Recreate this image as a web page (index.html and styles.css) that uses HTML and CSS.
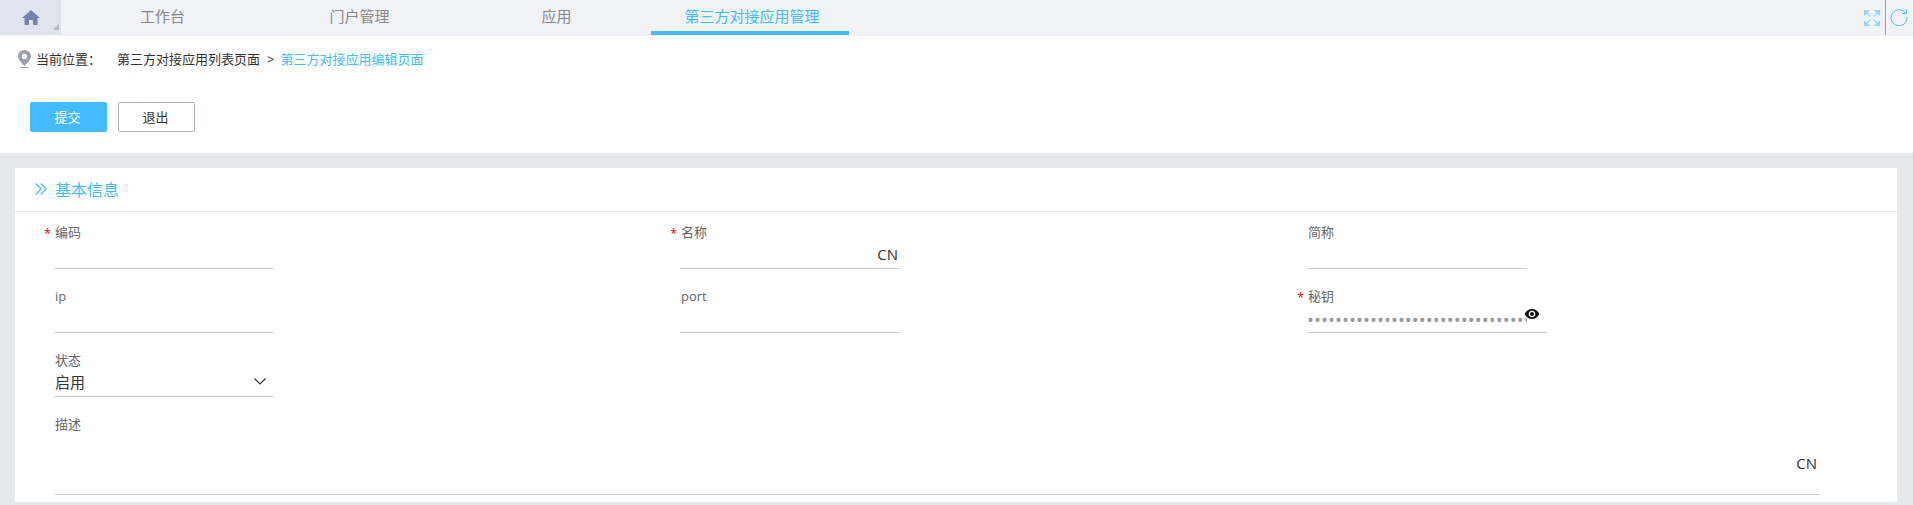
FILE: index.html
```html
<!DOCTYPE html>
<html lang="zh-CN">
<head>
    <meta charset="UTF-8">
    <title>第三方对接应用编辑页面</title>
    <link rel="stylesheet" href="styles.css">
</head>
<body>
    <div class="page">
        <div class="topbar">
            <div class="home">
                <svg class="home-icon" viewBox="0 0 18 15"><path d="M9 0 L18 8 H15.5 V15 H11 V10 H7 V15 H2.5 V8 H0 Z"/></svg>
                <span class="home-corner"></span>
            </div>
            <div class="tabs">
                <div class="tab">工作台</div>
                <div class="tab">门户管理</div>
                <div class="tab">应用</div>
                <div class="tab active">第三方对接应用管理</div>
            </div>
            <div class="tools">
                <svg class="tool-expand" viewBox="0 0 16 16"><path d="M0 0 H6 L0 6 Z M16 0 V6 L10 0 Z M0 16 V10 L6 16 Z M16 16 H10 L16 10 Z"/><path class="tool-expand-stem" d="M2.5 2.5 L6.5 6.5 M13.5 2.5 L9.5 6.5 M2.5 13.5 L6.5 9.5 M13.5 13.5 L9.5 9.5"/></svg>
                <span class="tool-line"></span>
                <svg class="tool-refresh" viewBox="0 0 18 18"><path d="M15.6 5.2 A8 8 0 1 0 17 9"/><path d="M16.4 1.4 V5.6 H12"/></svg>
            </div>
        </div>

        <div class="head">
            <div class="crumbs">
                <svg class="pin" viewBox="0 0 13 18"><path fill-rule="evenodd" d="M6.5 0 C10 0 13 2.8 13 6.3 C13 9.5 9 13.5 6.5 16 C4 13.5 0 9.5 0 6.3 C0 2.8 3 0 6.5 0 Z M6.5 3.8 A2.6 2.6 0 1 0 6.5 9 A2.6 2.6 0 1 0 6.5 3.8 Z"/><rect x="2.5" y="17" width="8" height="1"/></svg>
                <span class="crumb-title">当前位置：</span>
                <span class="crumb-link">第三方对接应用列表页面</span>
                <span class="crumb-sep">&gt;</span>
                <span class="crumb-now">第三方对接应用编辑页面</span>
            </div>
            <div class="actions">
                <button class="btn btn-primary">提交</button>
                <button class="btn">退出</button>
            </div>
        </div>

        <div class="content">
            <div class="card">
                <div class="card-title">
                    <svg class="chevrons" viewBox="0 0 12 12"><path d="M1 0.5 L6 6 L1 11.5"/><path d="M6 0.5 L11 6 L6 11.5"/></svg>
                    <span>基本信息</span>
                </div>
                <div class="form">
                    <div class="field">
                        <label class="required">编码</label>
                        <div class="control"></div>
                    </div>
                    <div class="field">
                        <label class="required">名称</label>
                        <div class="control"><span class="lang">CN</span></div>
                    </div>
                    <div class="field">
                        <label>简称</label>
                        <div class="control"></div>
                    </div>
                    <div class="field">
                        <label>ip</label>
                        <div class="control"></div>
                    </div>
                    <div class="field">
                        <label>port</label>
                        <div class="control"></div>
                    </div>
                    <div class="field">
                        <label class="required">秘钥</label>
                        <div class="control control-secret">
                            <input class="secret" type="password" value="aaaaaaaaaaaaaaaaaaaaaaaaaaaaaaaaaaaaaaaa">
                            <svg class="eye" viewBox="0 0 24 24"><path d="M12 4.5C7 4.5 2.73 7.61 1 12c1.73 4.39 6 7.5 11 7.5s9.27-3.11 11-7.5c-1.73-4.39-6-7.5-11-7.5zM12 17c-2.76 0-5-2.24-5-5s2.24-5 5-5 5 2.24 5 5-2.24 5-5 5zm0-8c-1.66 0-3 1.34-3 3s1.34 3 3 3 3-1.34 3-3-1.34-3-3-3z"/></svg>
                        </div>
                    </div>
                    <div class="field field-full">
                        <label>状态</label>
                        <div class="control control-select">
                            <span class="value">启用</span>
                            <svg class="arrow" viewBox="0 0 12 7"><path d="M0.5 0.5 L6 6 L11.5 0.5"/></svg>
                        </div>
                    </div>
                    <div class="field field-full field-desc">
                        <label>描述</label>
                        <div class="control"><span class="lang">CN</span></div>
                    </div>
                </div>
            </div>
        </div>
    </div>
</body>
</html>
```

FILE: styles.css
```css
* {
    box-sizing: border-box;
}
html, body {
    margin: 0;
    height: 100%;
    overflow: hidden;
}
body {
    font-family: "Open Sans", "Noto Sans CJK SC", sans-serif;
    font-size: 13px;
    color: #333;
    background: #fff;
}
.page {
    display: flex;
    flex-direction: column;
    height: 505px;
    border-right: 1px solid #c9cdd2;
}

/* top tabs */
.topbar {
    display: flex;
    height: 36px;
    background: #f0f2f5;
}
.home {
    position: relative;
    display: flex;
    align-items: center;
    justify-content: center;
    width: 61px;
    height: 35px;
    background: #dfe5ee;
}
.home-icon {
    width: 18px;
    height: 15px;
    margin-right: -1px;
    fill: #7583ab;
}
.home-corner {
    position: absolute;
    right: 2px;
    bottom: 5px;
    width: 6px;
    height: 6px;
    background: linear-gradient(135deg, transparent 50%, #b4bac6 50%);
}
.tabs {
    display: flex;
    flex: 1;
    margin-left: 3px;
}
.tab {
    width: 197px;
    height: 35px;
    line-height: 33px;
    text-align: center;
    font-size: 15px;
    color: #888;
}
.tab.active {
    width: 198px;
    margin-left: -4px;
    padding-left: 4px;
    color: #44bbff;
    border-bottom: 4px solid #44bbff;
}
.tools {
    display: flex;
    align-items: flex-start;
    padding-right: 5px;
}
.tool-expand {
    width: 16px;
    height: 16px;
    margin-top: 10px;
    fill: #8ed6ff;
}
.tool-expand-stem {
    fill: none;
    stroke: #8ed6ff;
    stroke-width: 1.4;
}
.tool-line {
    width: 1px;
    height: 35px;
    margin: 0 4px 0 5px;
    background: #44bbff;
}
.tool-refresh {
    width: 18px;
    height: 18px;
    margin-top: 8px;
    fill: none;
    stroke: #44bbff;
    stroke-width: 1;
}

/* breadcrumb and buttons */
.head {
    height: 117px;
    padding: 13px 0 0 18px;
}
.crumbs {
    display: flex;
    align-items: center;
    height: 20px;
    line-height: 18px;
}
.pin {
    width: 13px;
    height: 18px;
    fill: #9aa1ad;
}
.crumb-title {
    width: 81px;
    margin-left: 5px;
}
.crumb-sep {
    margin: 0 6px 0 7px;
}
.crumb-now {
    color: #44bbff;
}
.actions {
    display: flex;
    gap: 11px;
    margin: 33px 0 0 12px;
}
.btn {
    width: 77px;
    height: 30px;
    padding: 0 2px 2px 0;
    border: 1px solid #aab3c5;
    border-radius: 2px;
    background: #fff;
    color: #333;
    font-family: inherit;
    font-size: 13px;
}
.btn-primary {
    border-color: #44bbff;
    background: #44bbff;
    color: #fff;
}

/* card */
.content {
    flex: 1;
    padding: 15px 16px 3px 15px;
    background: #e5e9ec;
}
.card {
    height: 100%;
    background: #fff;
}
.card-title {
    display: flex;
    align-items: center;
    gap: 8px;
    height: 44px;
    padding: 0 0 2px 20px;
    border-bottom: 1px solid #e6e6e6;
    font-size: 16px;
    color: #44bbff;
}
.chevrons {
    width: 12px;
    height: 12px;
    fill: none;
    stroke: #44bbff;
    stroke-width: 1.3;
}
.form {
    display: grid;
    grid-template-columns: 626px 627px 1fr;
    padding: 0 77px 0 39px;
}
.field {
    width: 220px;
    padding-top: 12px;
    margin-bottom: 7px;
}
.field label {
    position: relative;
    display: block;
    height: 18px;
    line-height: 16px;
    padding-left: 1px;
    color: #666;
}
.field .required::before {
    content: "*";
    position: absolute;
    left: -10px;
    top: 1px;
    color: #f00;
}
.field-full {
    grid-column: 1 / -1;
}
.field-desc {
    width: auto;
    margin-bottom: 0;
}
.control {
    display: flex;
    align-items: center;
    justify-content: flex-end;
    height: 27px;
    padding: 0 2px 2px 0;
    border-bottom: 1px solid #ccc;
}
.field-desc .control {
    height: 61px;
    padding-right: 3px;
}
.lang {
    font-size: 15px;
    color: #333;
}
.control-secret {
    position: relative;
    width: 240px;
    padding: 0;
    justify-content: flex-start;
}
.secret {
    width: 220px;
    height: 26px;
    padding: 0;
    border: 0;
    outline: 0;
    background: transparent;
    color: #999;
    font-family: "Open Sans", sans-serif;
    font-size: 18.6px;
}
.eye {
    position: absolute;
    left: 217px;
    top: 0;
    width: 16px;
    height: 16px;
    fill: #111;
}
.control-select {
    justify-content: space-between;
    padding: 0 8px 3px 1px;
}
.value {
    font-size: 15px;
    line-height: 20px;
    color: #333;
}
.arrow {
    width: 12px;
    height: 7px;
    fill: none;
    stroke: #333;
    stroke-width: 1.2;
}
```
